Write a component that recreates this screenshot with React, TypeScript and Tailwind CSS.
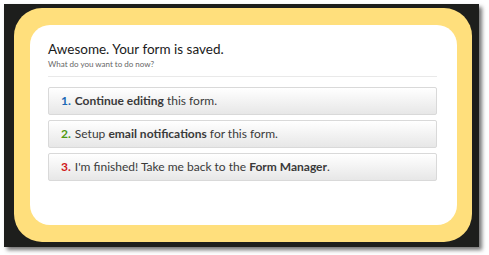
export default function App() {
  const items = [
    {
      n: "1.",
      color: "text-[#1a68b5]",
      body: (
        <>
          <b className="font-bold">Continue editing</b> this form.
        </>
      ),
    },
    {
      n: "2.",
      color: "text-[#4f9a12]",
      body: (
        <>
          Setup <b className="font-bold">email notifications</b> for this form.
        </>
      ),
    },
    {
      n: "3.",
      color: "text-[#d01818]",
      body: (
        <>
          I'm finished! Take me back to the <b className="font-bold">Form Manager</b>.
        </>
      ),
    },
  ];

  return (
    <div className="w-[489px] h-[255px] bg-white pt-[4px] pl-[4px] overflow-hidden">
      {/* dark backdrop with drop shadow */}
      <div className="w-[475px] h-[243px] bg-[#1d1e1c] pt-[4px] pl-[10px] shadow-[3px_3px_4px_rgba(0,0,0,0.55)]">
        {/* yellow frame */}
        <div className="w-[458px] h-[234px] bg-[#ffdf7c] rounded-[28px] pt-[17px] pl-[16px]">
          {/* white card */}
          <div className="w-[427px] h-[200px] bg-white rounded-[20px] pt-[15px] pl-[18px] pr-[20px] font-['Lato','Liberation_Sans',sans-serif]">
            <h1 className="text-[13.5px] leading-[18px] text-[#1a1a1a]">Awesome. Your form is saved.</h1>
            <p className="text-[8px] leading-[12px] text-[#666]">What do you want to do now?</p>
            <div className="h-px bg-[#e9e9e9] mt-[6px] mb-[10px]" />
            <div className="flex flex-col gap-[5px]">
              {items.map((it) => (
                <div
                  key={it.n}
                  className="h-[28px] flex items-center pl-[12px] border border-[#d9d9d9] rounded-[2px] bg-gradient-to-b from-white to-[#e7e7e7] text-[12px] text-[#3a3a3a]"
                >
                  <span className={`font-bold ${it.color} mr-[4px]`}>{it.n}</span>
                  <span>{it.body}</span>
                </div>
              ))}
            </div>
          </div>
        </div>
      </div>
    </div>
  );
}
